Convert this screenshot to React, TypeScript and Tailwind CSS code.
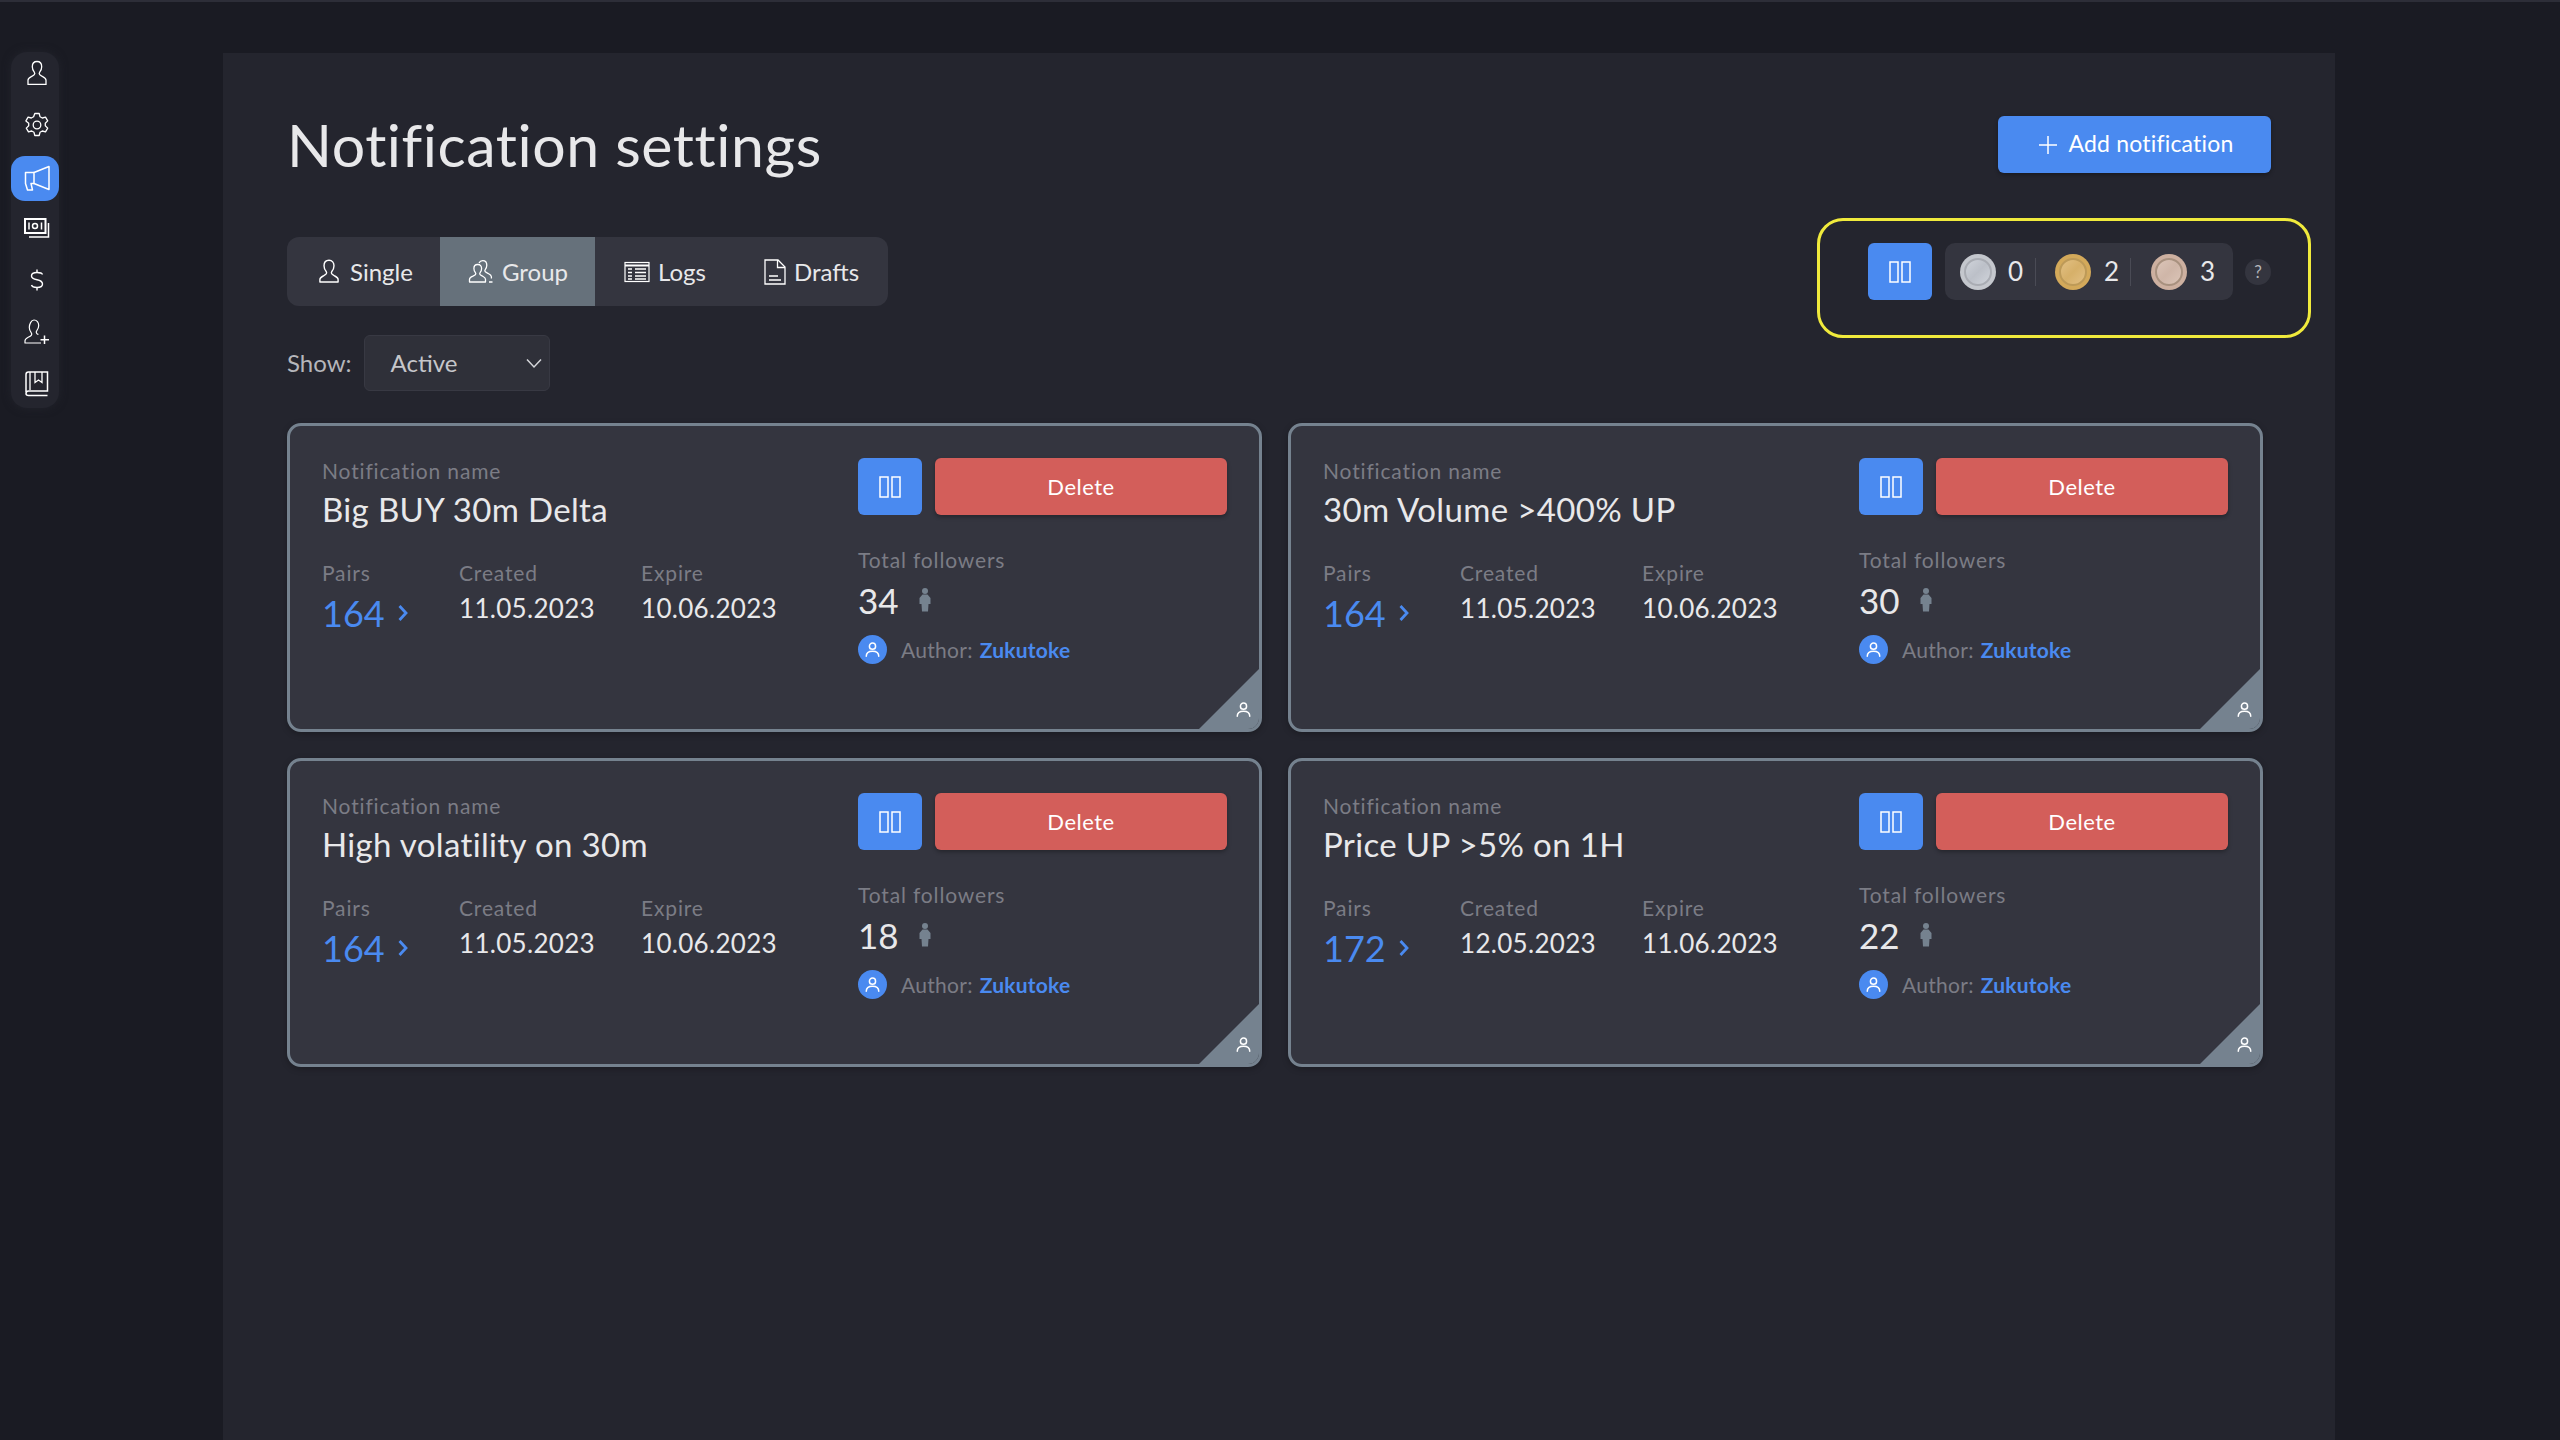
const FONT = "font-['Lato','Noto_Sans',sans-serif]";

function PauseIcon() {
  return (
    <svg width="22" height="22" viewBox="0 0 22 22" fill="none" stroke="white" strokeWidth="1.5">
      <rect x="1" y="1" width="8" height="20" />
      <rect x="13" y="1" width="8" height="20" />
    </svg>
  );
}

function PersonOutline({ size = 26, color = "white", width = 1.3 }: { size?: number; color?: string; width?: number }) {
  return (
    <svg width={size} height={size} viewBox="0 0 24 24" fill="none" stroke={color} strokeWidth={width} strokeLinejoin="round">
      <path d="M12 1.2c-3 0-4.600 2.200-4.600 5 0 2.200.9 4 2 5.300.5.7.5 1.600 0 2.300-.6.8-1.600 1.300-2.800 1.900-1.700.8-3 1.900-3 3.300v2.200h16.800v-2.200c0-1.400-1.300-2.500-3-3.300-1.200-.6-2.200-1.100-2.800-1.900-.5-.7-.5-1.600 0-2.300 1.100-1.300 2-3.100 2-5.300 0-2.800-1.600-5-4.600-5z" />
    </svg>
  );
}

function GroupOutline() {
  return (
    <svg width="26" height="27" viewBox="0 0 26 24" fill="none" stroke="white" strokeWidth="1.3" strokeLinejoin="round">
      <path d="M9.500 5c-2.200 0-3.600 1.700-3.600 4 0 1.800.7 3.100 1.500 4.100.5.600.5 1.400 0 2-.5.700-1.400 1.100-2.500 1.600C3 17.500 1.500 18.300 1.500 19.800v2.700h16v-2.700c0-1.500-1.500-2.300-2.900-3.100-1.100-.5-2-.9-2.500-1.600-.5-.6-.5-1.400 0-2 .8-1 1.500-2.300 1.500-4.100 0-2.300-1.400-4-3.600-4z" />
      <path d="M11 3.500C11.700 2 13 1.200 14.800 1.200c2.500 0 4 1.900 4 4.500 0 1.900-.8 3.300-1.600 4.400-.5.700-.5 1.400 0 2 .6.800 1.600 1.200 2.800 1.800 1.500.8 3.400 1.700 3.400 3.300v1.700" />
      <path d="M21 22.500h3.500" />
    </svg>
  );
}

function TableIcon() {
  return (
    <svg width="26" height="22" viewBox="0 0 26 22" fill="none" stroke="white" strokeWidth="1.200">
      <rect x="1" y="1.500" width="24" height="19" />
      <path d="M1 4.500h24" strokeWidth="2" />
      <path d="M4 8h4M11 8h11M4 11.500h4M11 11.500h11M4 15h4M11 15h11M4 18h4M11 18h11" strokeWidth="1.400" />
    </svg>
  );
}

function DocIcon() {
  return (
    <svg width="22" height="26" viewBox="0 0 22 26" fill="none" stroke="white" strokeWidth="1.300" strokeLinejoin="miter">
      <path d="M1 1h13l7 7v17H1z" />
      <path d="M13.500 1v7.500H21" />
      <path d="M5 17h9M5 21h12" />
    </svg>
  );
}

function SmallUser({ size = 18, sw = 1.8 }: { size?: number; sw?: number }) {
  return (
    <svg width={size} height={size} viewBox="0 0 18 18" fill="none" stroke="white" strokeWidth={sw} strokeLinecap="round">
      <circle cx="9" cy="5" r="3.700" />
      <path d="M1.500 17c0-3.800 3.200-6 7.500-6s7.500 2.200 7.500 6" />
    </svg>
  );
}

function Coin({ outer, inner, ring }: { outer: string; inner: string; ring: string }) {
  return (
    <div className={`w-[36px] h-[36px] rounded-full flex items-center justify-center ${outer}`}>
      <div className={`w-[28px] h-[28px] rounded-full border-2 ${inner} ${ring}`} />
    </div>
  );
}

function SideIcons() {
  const sw = 1.200;
  return (
    <>
      <div className="h-[42px] pl-[3px] flex items-center justify-center">
        <svg width="24" height="26" viewBox="0 0 24 26" fill="none" stroke="white" strokeWidth="1.300">
          <path d="M12 1.500c-3 0-4.700 2.300-4.700 5.200 0 2.300.9 4.200 2 5.500.6.800.6 1.800 0 2.500-.6.800-1.700 1.400-3 2-1.800.9-3.300 1.900-3.300 3.500v4.200h18v-4.200c0-1.600-1.500-2.600-3.300-3.500-1.300-.6-2.400-1.200-3-2-.6-.7-.6-1.700 0-2.500 1.100-1.300 2-3.200 2-5.500 0-2.900-1.700-5.200-4.700-5.200z" />
        </svg>
      </div>
      <div className="h-[62px] pl-[3px] flex items-center justify-center">
        <svg width="26" height="26" viewBox="0 0 26 26" fill="none" stroke="white" strokeWidth="1.300" strokeLinejoin="round">
          <path d="M10.800 1.500h4.400l.8 3.200 2.300 1.300 3.200-.9 2.200 3.800-2.400 2.300v2.600l2.400 2.300-2.200 3.800-3.200-.9-2.300 1.300-.8 3.200h-4.400l-.8-3.200-2.300-1.300-3.200.9-2.200-3.800 2.400-2.300v-2.600L1.900 8.900l2.200-3.800 3.200.9L9.600 4.700z" />
          <circle cx="13" cy="13" r="3.800" />
        </svg>
      </div>
      <div className="h-[45px] pl-[3px] bg-[#4a8af0] rounded-[14px] flex items-center justify-center">
        <svg width="26" height="26" viewBox="0 0 26 26" fill="none" stroke="white" strokeWidth="1.500" strokeLinejoin="round">
          <path d="M10 7.500 25 1.500v23L10 18.500z" />
          <path d="M10 7.500H1.500v11l2 6.500h5l-1.500-6.500H10" />
        </svg>
      </div>
      <div className="h-[55px] pl-[3px] flex items-center justify-center">
        <svg width="26" height="20" viewBox="0 0 26 20" fill="none" stroke="white" strokeWidth={sw}>
          <rect x="1" y="1" width="20.500" height="14" strokeWidth="2" />
          <circle cx="11" cy="8" r="2.500" strokeWidth="1.500" />
          <path d="M5 4.500v7M17.500 4.500v7" strokeWidth="1.500" />
          <path d="M24.500 5v14H5" strokeWidth="1.500" />
        </svg>
      </div>
      <div className="h-[49px] pl-[3px] flex items-center justify-center">
        <svg width="14" height="22" viewBox="0 0 14 22" fill="none" stroke="white" strokeWidth="1.400">
          <path d="M12.500 5.500C12 4 10 3.500 7 3.500c-3.500 0-5.500 1.300-5.500 3.500S3.500 10 7 10.700s5.500 1.800 5.500 4.300c0 2.200-2 3.500-5.500 3.500-3 0-5-.7-5.500-2.500" />
          <path d="M7 .5v3M7 18.500v3" />
        </svg>
      </div>
      <div className="h-[55px] pl-[3px] flex items-center justify-center">
        <svg width="26" height="26" viewBox="0 0 26 26" fill="none" stroke="white" strokeWidth="1.200" strokeLinejoin="round">
          <path d="M17 24H1v-2.200c0-1.600 1.400-2.600 3.200-3.500 1.300-.6 2.500-1.200 3.100-2 .6-.8.600-1.800 0-2.500-1.100-1.300-2-3.100-2-5.300 0-3 1.800-7.500 4.700-7.500s4.700 2.500 4.700 5.500c0 2.200-.9 4-2 5.300-.6.700-.6 1.700 0 2.500.4.500 1 .9 1.700 1.300" />
          <path d="M20.500 16.500v8.500M16.500 20.700H25" strokeWidth="1.500" />
        </svg>
      </div>
      <div className="h-[49px] pl-[3px] flex items-center justify-center">
        <svg width="24" height="26" viewBox="0 0 24 26" fill="none" stroke="white" strokeWidth="1.300">
          <path d="M1 21V3.500C1 2 2 1 3.500 1H22.500V20H3.500C2 20 1 21 1 22.500S2 24.500 3.500 24.500H22.500" strokeWidth="1.500" />
          <path d="M5 1v18M10 1v10.500l3.500-2.500 3.500 2.500V1" />
        </svg>
      </div>
    </>
  );
}

interface CardProps {
  name: string;
  pairs: number;
  created: string;
  expire: string;
  followers: number;
}

function Card({ name, pairs, created, expire, followers }: CardProps) {
  return (
    <div className="relative h-[309px] rounded-[14px] border-[3px] border-[#75828f] bg-[#34353f] pt-[32px] pl-[32px] pr-[32px] flex overflow-hidden shadow-[0_2px_6px_rgba(0,0,0,0.25)]">
      <div className="w-[536px] shrink-0">
        <div className="text-[#7b7c85] text-[21px] leading-[26px] tracking-[0.85px]">Notification name</div>
        <div className="text-[#e8e8ea] text-[33px] leading-[40px] mt-[5px] tracking-[0.35px]">{name}</div>
        <div className="flex mt-[31px]">
          <div className="w-[137px]">
            <div className="text-[#7b7c85] text-[21px] leading-[26px] tracking-[0.85px]">Pairs</div>
            <div className="flex items-center mt-[5px] text-[#4a8af0] text-[36px] leading-[44px]">
              {pairs}
              <svg className="ml-[13px]" width="10" height="18" viewBox="0 0 10 18" fill="none" stroke="#4a8af0" strokeWidth="2.800"><path d="M1.500 2 8 9l-6.500 7" /></svg>
            </div>
          </div>
          <div className="w-[182px]">
            <div className="text-[#7b7c85] text-[21px] leading-[26px] tracking-[0.85px]">Created</div>
            <div className="text-[#e8e8ea] text-[26px] leading-[32px] mt-[6px] tracking-[0.3px]">{created}</div>
          </div>
          <div>
            <div className="text-[#7b7c85] text-[21px] leading-[26px] tracking-[0.85px]">Expire</div>
            <div className="text-[#e8e8ea] text-[26px] leading-[32px] mt-[6px] tracking-[0.3px]">{expire}</div>
          </div>
        </div>
      </div>
      <div className="flex-1">
        <div className="flex gap-[13px]">
          <button className="w-[64px] h-[57px] bg-[#4a8af0] rounded-[6px] flex items-center justify-center"><PauseIcon /></button>
          <button className="flex-1 h-[57px] pb-[1px] bg-[#d35e5a] rounded-[6px] text-white text-[22px] tracking-[0.5px] shadow-[0_2px_4px_rgba(0,0,0,0.3)]">Delete</button>
        </div>
        <div className="text-[#7b7c85] text-[21px] leading-[26px] mt-[32px] tracking-[0.85px]">Total followers</div>
        <div className="flex items-center mt-[8px] h-[38px]">
          <span className="text-[#e8e8ea] text-[35px] leading-[38px]">{followers}</span>
          <svg className="ml-[20px]" width="12" height="24" viewBox="0 0 12 24" fill="#75828f">
            <circle cx="6" cy="3" r="3" />
            <path d="M3.500 6.500h5L11.500 10v6H9.500L9 23.500H3L2.500 16H.5v-6z" />
          </svg>
        </div>
        <div className="flex items-center mt-[15px]">
          <div className="w-[29px] h-[29px] rounded-full bg-[#4a8af0] flex items-center justify-center"><SmallUser size={15} /></div>
          <span className="text-[#7b7c85] text-[21px] ml-[14px] tracking-[0.3px]">Author:</span>
          <span className="text-[#4a8af0] text-[21px] font-bold ml-[7px] tracking-[0.2px]">Zukutoke</span>
        </div>
      </div>
      <div className="absolute right-0 bottom-0 w-[60px] h-[60px] bg-[#75828f] [clip-path:polygon(100%_0,100%_100%,0_100%)]" />
      <div className="absolute right-[8px] bottom-[12px]"><SmallUser size={15} /></div>
    </div>
  );
}

const cards: CardProps[] = [
  { name: "Big BUY 30m Delta", pairs: 164, created: "11.05.2023", expire: "10.06.2023", followers: 34 },
  { name: "30m Volume >400% UP", pairs: 164, created: "11.05.2023", expire: "10.06.2023", followers: 30 },
  { name: "High volatility on 30m", pairs: 164, created: "11.05.2023", expire: "10.06.2023", followers: 18 },
  { name: "Price UP >5% on 1H", pairs: 172, created: "12.05.2023", expire: "11.06.2023", followers: 22 },
];

export default function App() {
  return (
    <div className={`h-[1440px] overflow-hidden bg-[#1a1b23] border-t-2 border-[#2d2e38] flex items-start ${FONT}`}>
      <div className="ml-[11px] mt-[50px] w-[48px] h-[356px] shrink-0 rounded-[16px] bg-[#24252e] flex flex-col shadow-[0_0_8px_rgba(36,37,46,0.8)]">
        <SideIcons />
      </div>
      <div className="ml-[164px] mt-[51px] w-[2112px] h-[1387px] shrink-0 bg-[#24252e] px-[64px] pt-[63px]">
        <div className="flex justify-between items-start h-[57px]">
          <h1 className="text-[#e8e8ea] text-[59px] leading-[57px] tracking-[0.55px] font-normal">Notification settings</h1>
          <button className="w-[273px] h-[57px] pb-[3px] pl-[3px] bg-[#4a8af0] rounded-[6px] text-white text-[23px] tracking-[0.2px] flex items-center justify-center gap-[10px] shadow-[0_2px_4px_rgba(0,0,0,0.3)]">
            <svg width="20" height="20" viewBox="0 0 20 20" stroke="white" strokeWidth="1.500" className="mt-[3px]"><path d="M10 1v18M1 10h18" /></svg>
            Add notification
          </button>
        </div>
        <div className="flex justify-between items-start mt-[64px]">
          <div className="flex h-[69px] w-[601px] rounded-[12px] bg-[#34353f] overflow-hidden text-[24px] text-[#e8e8ea]">
            <div className="w-[153px] flex items-center justify-center gap-[8px] pl-[2px]"><PersonOutline />Single</div>
            <div className="w-[155px] bg-[#66717b] flex items-center justify-center gap-[8px] pl-[1px]"><GroupOutline />Group</div>
            <div className="w-[140px] flex items-center justify-center gap-[8px]"><TableIcon />Logs</div>
            <div className="w-[153px] flex items-center justify-center gap-[8px]"><DocIcon />Drafts</div>
          </div>
          <div className="relative flex items-center mt-[6px]">
            <button className="w-[64px] h-[57px] bg-[#4a8af0] rounded-[6px] flex items-center justify-center"><PauseIcon /></button>
            <div className="ml-[13px] w-[288px] h-[57px] rounded-[10px] bg-[#34353f] flex items-center pl-[15px] text-[#e8e8ea] text-[26px]">
              <Coin outer="bg-[#c4c7cd]" inner="bg-[linear-gradient(135deg,#cfd3da,#bcc0c8_50%,#d0d4db)]" ring="border-[#a9acb3]" />
              <span className="ml-[12px] w-[27px]">0</span>
              <div className="w-px h-[28px] bg-[#4a4b55]" />
              <div className="ml-[19px]"><Coin outer="bg-[#d3a95a]" inner="bg-[linear-gradient(135deg,#e2c084,#d6b069_50%,#e2c084)]" ring="border-[#bd9a58]" /></div>
              <span className="ml-[13px] w-[26px]">2</span>
              <div className="w-px h-[28px] bg-[#4a4b55]" />
              <div className="ml-[20px]"><Coin outer="bg-[#cdb0a0]" inner="bg-[linear-gradient(135deg,#dcc5b8,#cfb6a8_50%,#dcc5b8)]" ring="border-[#a8917f]" /></div>
              <span className="ml-[13px]">3</span>
            </div>
            <div className="ml-[12px] w-[26px] h-[26px] rounded-full bg-[#34353f] text-[#b5b6bb] text-[17px] flex items-center justify-center">?</div>
            <div className="absolute left-[-51px] right-[-40px] top-[-25px] bottom-[-38px] border-[3px] border-[#f0ea3c] rounded-[26px] pointer-events-none" />
          </div>
        </div>
        <div className="flex items-center mt-[29px] text-[24px]">
          <span className="text-[#b5b6bb]">Show:</span>
          <div className="ml-[12px] w-[186px] h-[56px] rounded-[6px] bg-[#2f3039] border border-[#383943] flex items-center justify-between pl-[26px] pr-[5px] text-[#c5c6ca]">
            Active
            <svg width="20" height="20" viewBox="0 0 20 20" fill="none" stroke="#d5d6da" strokeWidth="1.500"><path d="M3 6.500 10 14l7-7.500" /></svg>
          </div>
        </div>
        <div className="grid grid-cols-[975px_975px] gap-x-[26px] gap-y-[26px] mt-[32px]">
          {cards.map((c) => (
            <Card key={c.name} {...c} />
          ))}
        </div>
      </div>
    </div>
  );
}
